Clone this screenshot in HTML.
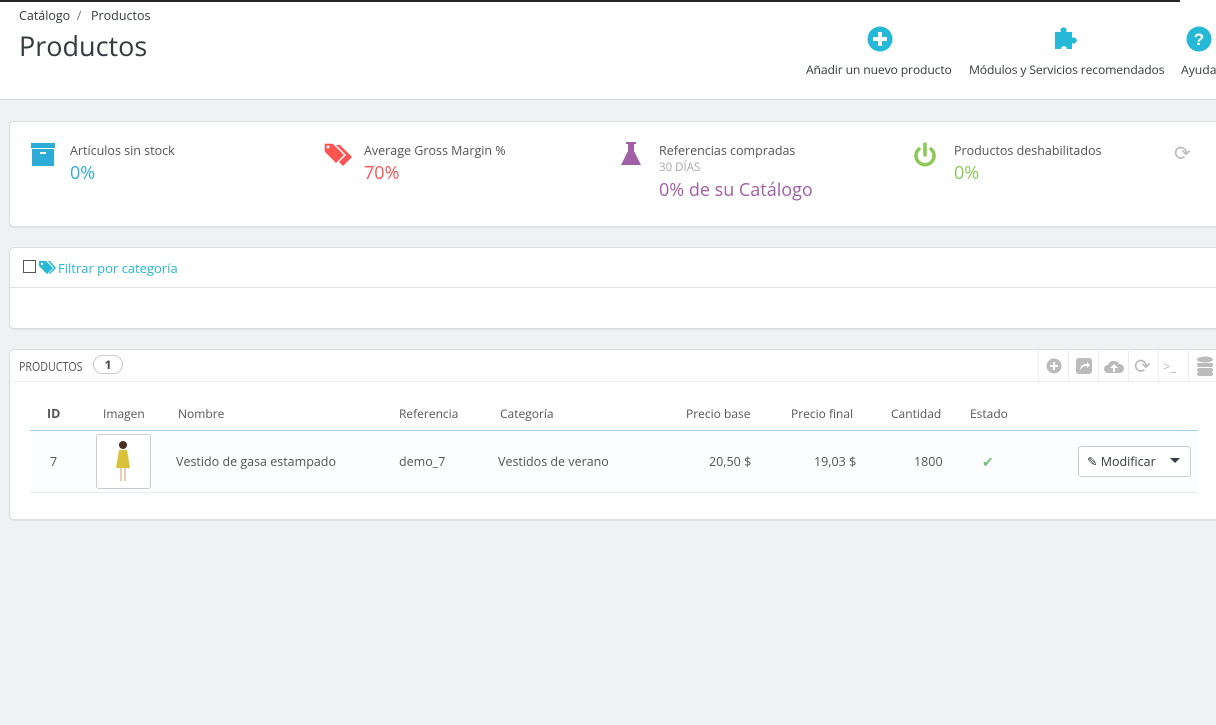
<!DOCTYPE html>
<html><head><meta charset="utf-8"><style>
*{box-sizing:border-box;margin:0;padding:0}
body{width:1216px;height:725px;overflow:hidden;background:#eff1f2;font-family:"Open Sans","Liberation Sans",sans-serif;color:#555;font-size:12px;position:relative}
.a{position:absolute;white-space:nowrap}
.panel{position:absolute;background:#fff;border:1px solid #dcdfe1;border-radius:5px;box-shadow:0 1px 1px rgba(0,0,0,.06)}
</style></head><body>
<div class="a" style="left:0;top:0;width:1216px;height:100px;background:#fff;border-bottom:1px solid #d9dcde"></div>
<div class="a" style="left:0;top:0;width:1180px;height:2px;background:#25272a"></div>
<div class="a" style="left:19px;top:7px;font-size:12.5px;color:#363a41">Catálogo &nbsp;<span style="color:#777">/</span>&nbsp;&nbsp; Productos</div>
<div class="a" style="left:19px;top:27px;font-size:27px;color:#363a41">Productos</div>

<svg class="a" style="left:867px;top:26px" width="26" height="26" viewBox="0 0 26 26"><circle cx="13" cy="13" r="12.5" fill="#25b9d7"/><rect x="11" y="6" width="4" height="14" fill="#fff"/><rect x="6" y="11" width="14" height="4" fill="#fff"/></svg>
<div class="a" style="left:806px;top:61px;font-size:12.2px;color:#363a41;letter-spacing:-0.15px">Añadir un nuevo producto</div>
<svg class="a" style="left:1053px;top:23px" width="30" height="28" viewBox="0 0 30 28"><path d="M2 9h6a3 3 0 1 1 5 0h6v6a3 3 0 1 1 0 5v6h-5a3 3 0 0 0-6 0H2z" fill="#25b9d7"/></svg>
<div class="a" style="left:969px;top:61px;font-size:12.2px;color:#363a41;letter-spacing:-0.15px">Módulos y Servicios recomendados</div>
<svg class="a" style="left:1186px;top:26px" width="26" height="26" viewBox="0 0 26 26"><circle cx="13" cy="13" r="12.5" fill="#25b9d7"/><text x="13" y="19" text-anchor="middle" font-size="17" font-weight="bold" fill="#fff" font-family="Liberation Sans">?</text></svg>
<div class="a" style="left:1181px;top:61px;font-size:12.2px;color:#363a41">Ayuda</div>

<div class="panel" style="left:9px;top:121px;width:1230px;height:106px"></div>
<svg class="a" style="left:31px;top:143px" width="24" height="24" viewBox="0 0 24 24"><rect x="0" y="0" width="24" height="5" fill="#2eacd8"/><rect x="1" y="6" width="22" height="17" fill="#2eacd8"/><rect x="9" y="9" width="6" height="2" fill="#fff"/></svg>
<div class="a" style="left:70px;top:142px;font-size:12.5px;color:#555">Artículos sin stock</div>
<div class="a" style="left:70px;top:161px;font-size:18px;color:#2eacd8">0%</div>
<svg class="a" style="left:323px;top:142px" width="30" height="26" viewBox="0 0 30 26"><path d="M5 0h9l12 12-9 9L5 9z" fill="#ff5450" transform="translate(3,3)"/><path d="M1 1h9l12 12-9 9L1 10z" fill="#ff5450" stroke="#fff" stroke-width="1.5"/><circle cx="5" cy="5" r="1.5" fill="#fff"/></svg>
<div class="a" style="left:364px;top:142px;font-size:12.5px;color:#555">Average Gross Margin %</div>
<div class="a" style="left:364px;top:161px;font-size:18px;color:#ff5450">70%</div>
<svg class="a" style="left:620px;top:142px" width="22" height="24" viewBox="0 0 22 24"><rect x="6" y="0" width="10" height="2" fill="#a15fa5"/><path d="M8 2h6v7l7 14H1l7-14z" fill="#a15fa5"/></svg>
<div class="a" style="left:659px;top:142px;font-size:12.5px;color:#555">Referencias compradas</div>
<div class="a" style="left:659px;top:160px;font-size:11.5px;color:#aaa">30 DÍAS</div>
<div class="a" style="left:659px;top:178px;font-size:18px;color:#a15fa5">0% de su Catálogo</div>
<svg class="a" style="left:912px;top:142px" width="26" height="26" viewBox="0 0 26 26"><path d="M7 7a9 9 0 1 0 12 0" fill="none" stroke="#8bc954" stroke-width="3.5" stroke-linecap="round"/><line x1="13" y1="2" x2="13" y2="13" stroke="#8bc954" stroke-width="3.5" stroke-linecap="round"/></svg>
<div class="a" style="left:954px;top:142px;font-size:12.5px;color:#555">Productos deshabilitados</div>
<div class="a" style="left:954px;top:161px;font-size:18px;color:#8bc954">0%</div>
<div class="a" style="left:1174px;top:139px;font-size:20px;color:#bbb">⟳</div>

<div class="panel" style="left:9px;top:247px;width:1230px;height:82px"></div>
<div class="a" style="left:10px;top:287px;width:1210px;height:1px;background:#e0e3e5"></div>
<div class="a" style="left:23px;top:260px;width:13px;height:13px;border:1px solid #555;background:#fff"></div>
<svg class="a" style="left:39px;top:261px" width="17" height="14" viewBox="0 0 17 14"><path d="M0 0h7l7 7-6 6-8-8z" fill="#25b9d7"/><path d="M9 0h2l6 7-6 6-1-1 5-5z" fill="#25b9d7"/><circle cx="3" cy="3" r="1.2" fill="#fff"/></svg>
<div class="a" style="left:58px;top:259px;font-size:13px;color:#25b9d7">Filtrar por categoría</div>

<div class="panel" style="left:9px;top:349px;width:1230px;height:171px"></div>
<div class="a" style="left:19px;top:357px;font-size:13px;color:#555;transform:scaleX(0.82);transform-origin:left">PRODUCTOS</div>
<div class="a" style="left:93px;top:355px;width:30px;height:19px;border:1px solid #ccc;border-radius:10px;text-align:center;font-weight:bold;font-size:12px;line-height:17px;color:#444">1</div>
<div class="a" style="left:14px;top:381px;width:1210px;height:1px;background:#eee"></div>
<div class="a" style="left:1038px;top:351px;width:1px;height:30px;background:#eee"></div>
<div class="a" style="left:1068px;top:351px;width:1px;height:30px;background:#eee"></div>
<div class="a" style="left:1098px;top:351px;width:1px;height:30px;background:#eee"></div>
<div class="a" style="left:1128px;top:351px;width:1px;height:30px;background:#eee"></div>
<div class="a" style="left:1158px;top:351px;width:1px;height:30px;background:#eee"></div>
<div class="a" style="left:1188px;top:351px;width:1px;height:30px;background:#eee"></div>
<svg class="a" style="left:1046px;top:358px" width="16" height="16"><circle cx="8" cy="8" r="7.5" fill="#bbb"/><rect x="7" y="4" width="2" height="8" fill="#fff"/><rect x="4" y="7" width="8" height="2" fill="#fff"/></svg>
<svg class="a" style="left:1076px;top:358px" width="16" height="16"><rect width="16" height="16" rx="3" fill="#bbb"/><path d="M4 12c0-4 3-6 7-6V4l3 3-3 3V8c-3 0-5 1-7 4z" fill="#fff"/></svg>
<svg class="a" style="left:1103px;top:358px" width="22" height="16"><path d="M5 15a4 4 0 0 1 0-8 6 6 0 0 1 11-1 4.5 4.5 0 0 1 1 9z" fill="#bbb"/><path d="M11 6l-4 4h3v4h2v-4h3z" fill="#fff"/></svg>
<div class="a" style="left:1134px;top:352px;font-size:20px;color:#bbb">⟳</div>
<div class="a" style="left:1163px;top:357px;font-size:13px;color:#bbb">&gt;_</div>
<svg class="a" style="left:1196px;top:356px" width="18" height="20"><ellipse cx="9" cy="3.5" rx="8" ry="3" fill="#bbb"/><rect x="1" y="7" width="16" height="4" rx="2" fill="#bbb"/><rect x="1" y="12" width="16" height="4" rx="2" fill="#bbb"/><rect x="1" y="16" width="16" height="4" rx="2" fill="#bbb"/></svg>

<div class="a" style="left:47px;top:405px;font-weight:bold;color:#555;font-size:12.5px">ID</div>
<div class="a" style="left:103px;top:405px">Imagen</div>
<div class="a" style="left:178px;top:405px">Nombre</div>
<div class="a" style="left:399px;top:405px">Referencia</div>
<div class="a" style="left:500px;top:405px">Categoría</div>
<div class="a" style="left:686px;top:405px">Precio base</div>
<div class="a" style="left:791px;top:405px">Precio final</div>
<div class="a" style="left:891px;top:405px">Cantidad</div>
<div class="a" style="left:970px;top:405px">Estado</div>
<div class="a" style="left:30px;top:430px;width:1168px;height:1px;background:#a0d0eb"></div>
<div class="a" style="left:30px;top:431px;width:1168px;height:62px;background:#fcfdfe;border-bottom:1px solid #eaedef"></div>
<div class="a" style="left:50px;top:453px;font-size:12.5px">7</div>
<div class="a" style="left:96px;top:434px;width:55px;height:55px;border:1px solid #ccc;border-radius:3px;background:#fff"></div>
<svg class="a" style="left:113px;top:440px" width="20" height="44"><circle cx="10" cy="5" r="4" fill="#4a3020"/><path d="M6 10h8l3 18H3z" fill="#d9c23a"/><rect x="7" y="28" width="2" height="13" fill="#e8cdb8"/><rect x="11" y="28" width="2" height="13" fill="#e8cdb8"/></svg>
<div class="a" style="left:176px;top:453px;font-size:12.5px">Vestido de gasa estampado</div>
<div class="a" style="left:399px;top:453px;font-size:12.5px">demo_7</div>
<div class="a" style="left:498px;top:453px;font-size:12.5px">Vestidos de verano</div>
<div class="a" style="left:709px;top:453px;font-size:12.5px">20,50 $</div>
<div class="a" style="left:814px;top:453px;font-size:12.5px">19,03 $</div>
<div class="a" style="left:914px;top:453px;font-size:12.5px">1800</div>
<div class="a" style="left:982px;top:453px;font-size:14px;color:#72c279">✔</div>
<div class="a" style="left:1078px;top:446px;width:113px;height:31px;border:1px solid #ccc;border-radius:3px;background:#fff"></div>
<div class="a" style="left:1087px;top:453px;font-size:12.5px;color:#363a41">✎ Modificar</div>
<div class="a" style="left:1170px;top:458px;width:0;height:0;border-left:5px solid transparent;border-right:5px solid transparent;border-top:5px solid #363a41"></div>
</body></html>
